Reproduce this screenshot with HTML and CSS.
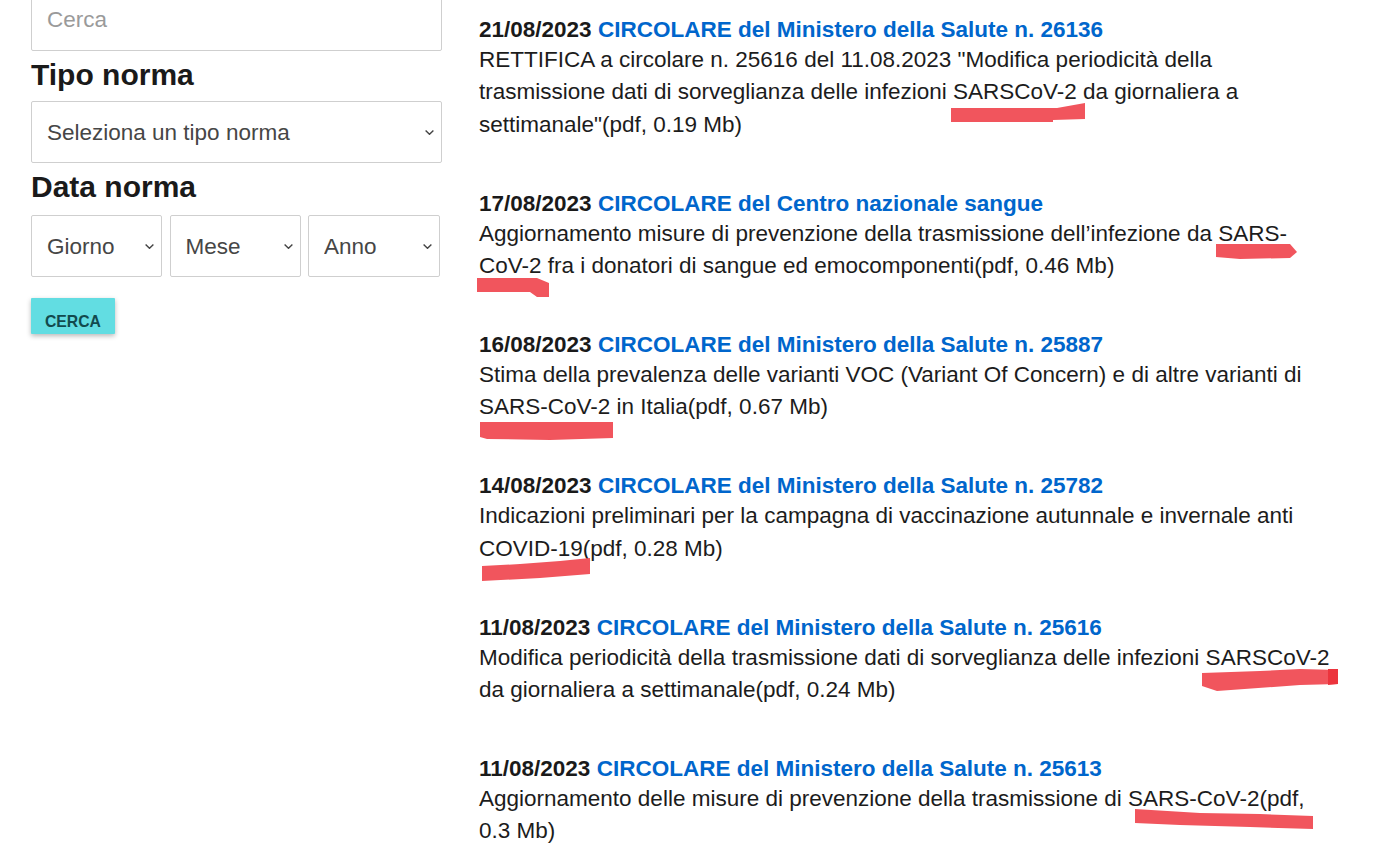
FILE: index.html
```html
<!DOCTYPE html>
<html lang="it">
<head>
<meta charset="utf-8">
<title>Normativa</title>
<link rel="stylesheet" href="styles.css">
</head>
<body>
<div class="page">
  <aside class="sidebar">
    <input class="field search" type="text" placeholder="Cerca">
    <h2 class="label">Tipo norma</h2>
    <div class="select-wrap">
      <select class="field"><option>Seleziona un tipo norma</option></select>
      <svg class="chev" viewBox="0 0 9 5" width="9" height="5"><path d="M0.6 0.6 L4.5 4.3 L8.4 0.6" fill="none" stroke="#444" stroke-width="1.4"/></svg>
    </div>
    <h2 class="label">Data norma</h2>
    <div class="date-row">
      <div class="select-wrap">
        <select class="field"><option>Giorno</option></select>
        <svg class="chev" viewBox="0 0 9 5" width="9" height="5"><path d="M0.6 0.6 L4.5 4.3 L8.4 0.6" fill="none" stroke="#444" stroke-width="1.4"/></svg>
      </div>
      <div class="select-wrap">
        <select class="field"><option>Mese</option></select>
        <svg class="chev" viewBox="0 0 9 5" width="9" height="5"><path d="M0.6 0.6 L4.5 4.3 L8.4 0.6" fill="none" stroke="#444" stroke-width="1.4"/></svg>
      </div>
      <div class="select-wrap">
        <select class="field"><option>Anno</option></select>
        <svg class="chev" viewBox="0 0 9 5" width="9" height="5"><path d="M0.6 0.6 L4.5 4.3 L8.4 0.6" fill="none" stroke="#444" stroke-width="1.4"/></svg>
      </div>
    </div>
    <button class="btn" type="button">CERCA</button>
  </aside>

  <main class="results">
    <article class="entry">
      <div class="title"><span class="date">21/08/2023</span> <a class="link" href="#">CIRCOLARE del Ministero della Salute n. 26136</a></div>
      <p class="desc">RETTIFICA a circolare n. 25616 del 11.08.2023 "Modifica periodicità della trasmissione dati di sorveglianza delle infezioni SARSCoV-2 da giornaliera a settimanale"(pdf, 0.19 Mb)</p>
    </article>
    <article class="entry">
      <div class="title"><span class="date">17/08/2023</span> <a class="link" href="#">CIRCOLARE del Centro nazionale sangue</a></div>
      <p class="desc">Aggiornamento misure di prevenzione della trasmissione dell’infezione da SARS-CoV-2 fra i donatori di sangue ed emocomponenti(pdf, 0.46 Mb)</p>
    </article>
    <article class="entry">
      <div class="title"><span class="date">16/08/2023</span> <a class="link" href="#">CIRCOLARE del Ministero della Salute n. 25887</a></div>
      <p class="desc">Stima della prevalenza delle varianti VOC (Variant Of Concern) e di altre varianti di SARS-CoV-2 in Italia(pdf, 0.67 Mb)</p>
    </article>
    <article class="entry">
      <div class="title"><span class="date">14/08/2023</span> <a class="link" href="#">CIRCOLARE del Ministero della Salute n. 25782</a></div>
      <p class="desc">Indicazioni preliminari per la campagna di vaccinazione autunnale e invernale anti COVID-19(pdf, 0.28 Mb)</p>
    </article>
    <article class="entry">
      <div class="title"><span class="date">11/08/2023</span> <a class="link" href="#">CIRCOLARE del Ministero della Salute n. 25616</a></div>
      <p class="desc">Modifica periodicità della trasmissione dati di sorveglianza delle infezioni SARSCoV-2 da giornaliera a settimanale(pdf, 0.24 Mb)</p>
    </article>
    <article class="entry">
      <div class="title"><span class="date">11/08/2023</span> <a class="link" href="#">CIRCOLARE del Ministero della Salute n. 25613</a></div>
      <p class="desc">Aggiornamento delle misure di prevenzione della trasmissione di SARS-CoV-2(pdf, 0.3 Mb)</p>
    </article>
  </main>
</div>

<svg class="marks" viewBox="0 0 1385 859" width="1385" height="859" aria-hidden="true">
  <polygon points="951,108 1057,108 1085,103 1085,119 1053,120 1053,122 951,122"/>
  <polygon points="1216,244 1290,244 1297,252 1290,258 1240,259 1216,257"/>
  <polygon points="477,278 537,278 549,283 549,297 537,297 530,292 477,292"/>
  <polygon points="480,422 613,422 613,438 550,440 487,439 480,437"/>
  <polygon points="482,566 520,564 560,561 590,558 590,574 540,578 482,581"/>
  <polygon points="1202,673 1260,671 1300,669 1338,670 1338,684 1300,685 1217,691 1202,686"/>
  <polygon class="mark-end" points="1328,669 1338,669 1338,684 1328,685"/>
  <polygon points="1135,809 1200,813 1260,814 1313,816 1313,829 1250,827 1180,825 1135,823"/>
</svg>
</body>
</html>
```

FILE: styles.css
```css
* {
  box-sizing: border-box;
}

html, body {
  margin: 0;
  padding: 0;
  background: #ffffff;
}

body {
  position: relative;
  width: 1385px;
  height: 859px;
  overflow: hidden;
  font-family: "Liberation Sans", Arial, sans-serif;
  color: #1c1c1c;
}

.page {
  display: flex;
  align-items: flex-start;
  padding-left: 31px;
}

.sidebar {
  width: 411px;
  margin-top: -11px;
  display: flex;
  flex-direction: column;
  align-items: stretch;
}

.field {
  display: block;
  width: 100%;
  height: 62px;
  margin: 0;
  padding: 0 30px 0 15px;
  border: 1px solid #cfcfcf;
  border-radius: 2px;
  background: #ffffff;
  font-family: "Liberation Sans", Arial, sans-serif;
  font-size: 22.5px;
  color: #464646;
  appearance: none;
  -webkit-appearance: none;
  outline: none;
}

.search::placeholder {
  color: #9a9a9a;
}

.label {
  margin: 6px 0 8px;
  font-size: 30px;
  line-height: 36px;
  font-weight: 700;
  color: #1a1a1a;
}

.select-wrap {
  position: relative;
}

.chev {
  position: absolute;
  right: 8px;
  top: 29px;
  pointer-events: none;
}

.date-row {
  display: grid;
  grid-template-columns: 131px 131px 132px;
  column-gap: 7.5px;
  margin-top: 2px;
}

.date-row .field {
  padding-left: 15px;
}

.btn {
  align-self: flex-start;
  margin-top: 21px;
  width: 84px;
  height: 36px;
  padding: 16px 0 4px;
  border: 0;
  border-radius: 1px;
  background: #62dde2;
  color: #124a4e;
  font-family: "Liberation Sans", Arial, sans-serif;
  font-size: 15.75px;
  line-height: 15.75px;
  font-weight: 700;
  text-align: center;
  box-shadow: 0 2px 5px rgba(0, 0, 0, 0.28);
}

.results {
  width: 854px;
  margin-left: 37px;
  margin-top: 16px;
  font-size: 22.5px;
}

.entry {
  margin-bottom: 48.5px;
}

.title {
  line-height: 28px;
  font-weight: 700;
}

.date {
  color: #1a1a1a;
}

.link {
  color: #0066cc;
  text-decoration: none;
}

.desc {
  margin: 0;
  line-height: 32.4px;
  color: #1c1c1c;
}

.marks {
  position: absolute;
  top: 0;
  left: 0;
  pointer-events: none;
}

.marks polygon {
  fill: #f1555d;
}

.marks .mark-end {
  fill: #ec343d;
}
```
